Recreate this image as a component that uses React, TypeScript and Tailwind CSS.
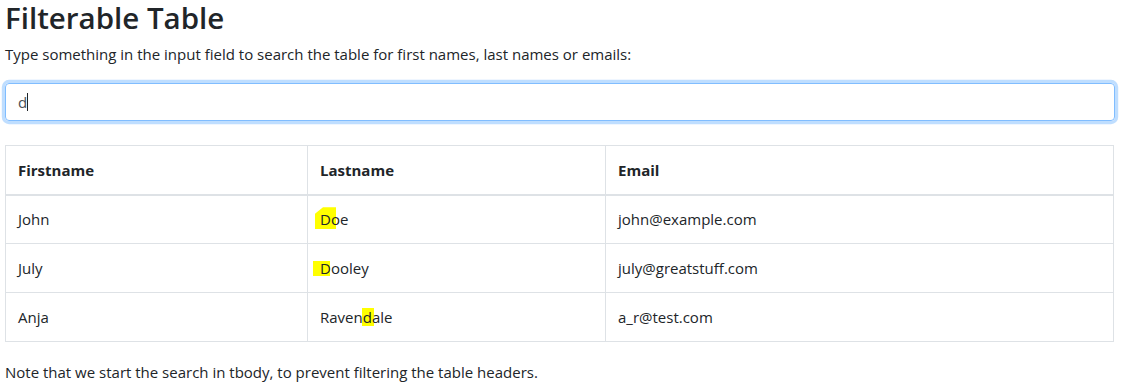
import React from "react";

const font = { fontFamily: '"Open Sans", "Noto Sans", sans-serif' };

function Hl({ children, box }: { children: React.ReactNode; box: string }) {
  return (
    <span className="relative">
      <span className={`absolute -z-10 bg-[#ffff00] ${box}`} />
      {children}
    </span>
  );
}

const rows: [React.ReactNode, React.ReactNode, React.ReactNode][] = [
  [
    "John",
    <>
      <Hl box="left-[-5px] top-[-2px] w-[21px] h-[22px] [clip-path:polygon(38%_0,100%_0,100%_100%,0_100%,0_30%)]">D</Hl>
      oe
    </>,
    "john@example.com",
  ],
  [
    "July",
    <>
      <Hl box="left-[-7px] top-[3px] w-[17px] h-[15px]">D</Hl>
      ooley
    </>,
    "july@greatstuff.com",
  ],
  [
    "Anja",
    <>
      Raven
      <Hl box="left-[-1px] top-[1px] w-[12px] h-[18px]">d</Hl>
      ale
    </>,
    "a_r@test.com",
  ],
];

export default function App() {
  return (
    <div className="bg-white text-[#212529] px-[5px] w-[1125px] h-[385px] overflow-hidden" style={font}>
      <h2 className="text-[29.5px] leading-[36px] font-semibold mb-[6px]">Filterable Table</h2>
      <p className="text-[15px] leading-[24px] mb-[17px]">
        Type something in the input field to search the table for first names, last names or emails:
      </p>
      <div className="h-[38px] w-[1110px] rounded-[4px] border border-[#80bdff] shadow-[0_0_0_3.2px_rgba(0,123,255,0.25)] px-[12px] flex items-center text-[15px] text-[#495057]">
        <span>d</span>
        <span className="inline-block w-px h-[18px] bg-[#212529]" />
      </div>
      <div className="h-[24px]" />
      <table className="border-collapse w-[1109px] text-[15px] leading-[24px]">
        <thead>
          <tr>
            <th className="w-[302px] text-left font-bold border border-[#dee2e6] border-b-2 px-[12px] h-[49px]">Firstname</th>
            <th className="w-[298px] text-left font-bold border border-[#dee2e6] border-b-2 px-[12px] h-[49px]">Lastname</th>
            <th className="text-left font-bold border border-[#dee2e6] border-b-2 px-[12px] h-[49px]">Email</th>
          </tr>
        </thead>
        <tbody>
          {rows.map((r, i) => (
            <tr key={i}>
              {r.map((c, j) => (
                <td key={j} className="border border-[#dee2e6] px-[12px] h-[49px]">
                  <span className="relative isolate">{c}</span>
                </td>
              ))}
            </tr>
          ))}
        </tbody>
      </table>
      <p className="text-[15px] leading-[24px] mt-[18px]">
        Note that we start the search in tbody, to prevent filtering the table headers.
      </p>
    </div>
  );
}
